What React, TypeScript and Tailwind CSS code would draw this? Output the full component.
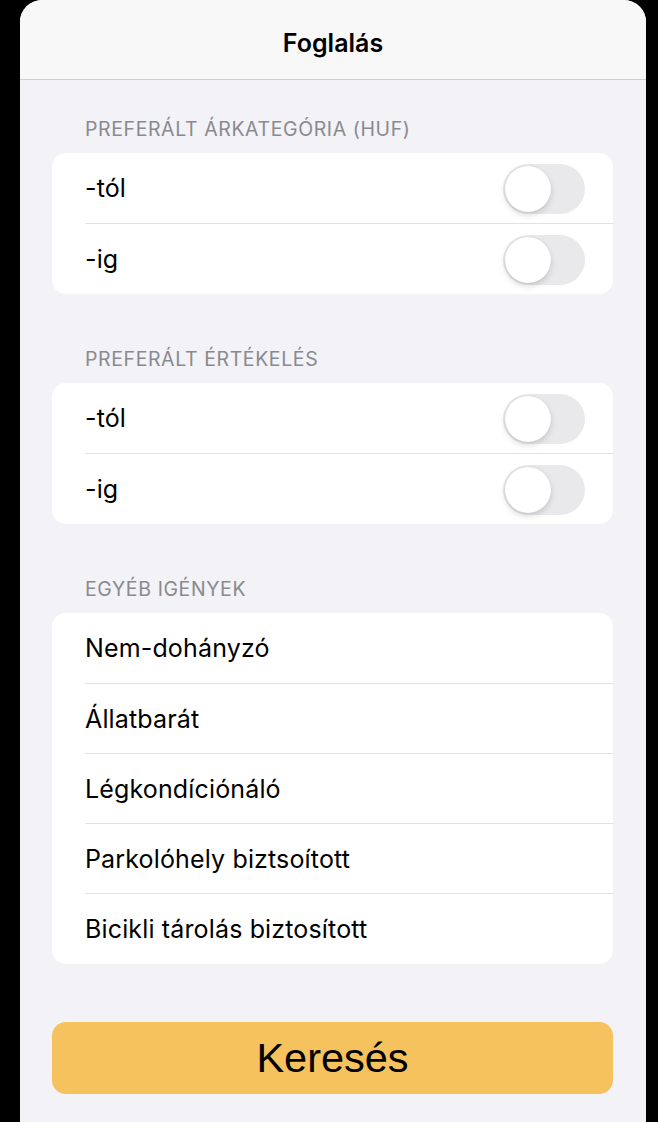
import { FC } from "react"

const font = { fontFamily: "Inter, 'Noto Sans', sans-serif" }

const Toggle: FC = () => {
  return (
    <div className="w-[82px] h-[50px] rounded-full bg-[#e9e9eb] p-[2px] flex items-center">
      <div className="w-[46px] h-[46px] rounded-full bg-white shadow-[0_3px_6px_rgba(0,0,0,0.15),0_0_1px_rgba(0,0,0,0.12)]" />
    </div>
  )
}

const Row: FC<{ title: string; first?: boolean; toggle?: boolean }> = ({ title, first, toggle }) => {
  return (
    <div className="h-[70px] pl-[33px]">
      <div className={`h-full flex items-center justify-between pr-[28px] pt-[2px] ${first ? "" : "border-t border-[#e2e2e4]"}`}>
        <span className="text-[25px] text-black tracking-[0.15px]">{title}</span>
        {toggle && <Toggle />}
      </div>
    </div>
  )
}

const Label: FC<{ text: string; top: string }> = ({ text, top }) => {
  return (
    <div className={`${top} mb-[12px] pl-[33px] text-[19.5px] leading-[23px] text-[#8a8a8e] tracking-[0.6px]`}>
      {text}
    </div>
  )
}

const App: FC = () => {
  const extras = ["Nem-dohányzó", "Állatbarát", "Légkondíciónáló", "Parkolóhely biztsoított", "Bicikli tárolás biztosított"]

  return (
    <div className="w-[658px] h-[1122px] bg-black flex pl-[20px] pr-[12px] overflow-hidden" style={font}>
      <div className="flex-1 flex flex-col rounded-t-[22px] bg-[#f2f2f7] overflow-hidden">
        <div className="h-[80px] shrink-0 bg-[#f8f8f8] border-b border-[#cfcfd1] flex items-center justify-center pt-[9px]">
          <span className="text-[25px] font-semibold text-black">Foglalás</span>
        </div>

        <div className="px-[32px] pr-[33px] flex flex-col">
          <Label text="PREFERÁLT ÁRKATEGÓRIA (HUF)" top="mt-[38px]" />
          <div className="bg-white rounded-[14px] overflow-hidden pb-[1px]">
            <Row title="-tól" first toggle />
            <Row title="-ig" toggle />
          </div>

          <Label text="PREFERÁLT ÉRTÉKELÉS" top="mt-[54px]" />
          <div className="bg-white rounded-[14px] overflow-hidden pb-[1px]">
            <Row title="-tól" first toggle />
            <Row title="-ig" toggle />
          </div>

          <Label text="EGYÉB IGÉNYEK" top="mt-[54px]" />
          <div className="bg-white rounded-[14px] overflow-hidden pb-[1px]">
            {extras.map((item, i) => (
              <Row key={item} title={item} first={i === 0} />
            ))}
          </div>

          <button className="mt-[58px] h-[72px] rounded-[14px] bg-[#f5c25e] flex items-center justify-center">
            <span className="text-[41.5px] text-black" style={{ fontFamily: "'Liberation Sans', Arial, sans-serif" }}>Keresés</span>
          </button>
        </div>
      </div>
    </div>
  )
}

export default App
